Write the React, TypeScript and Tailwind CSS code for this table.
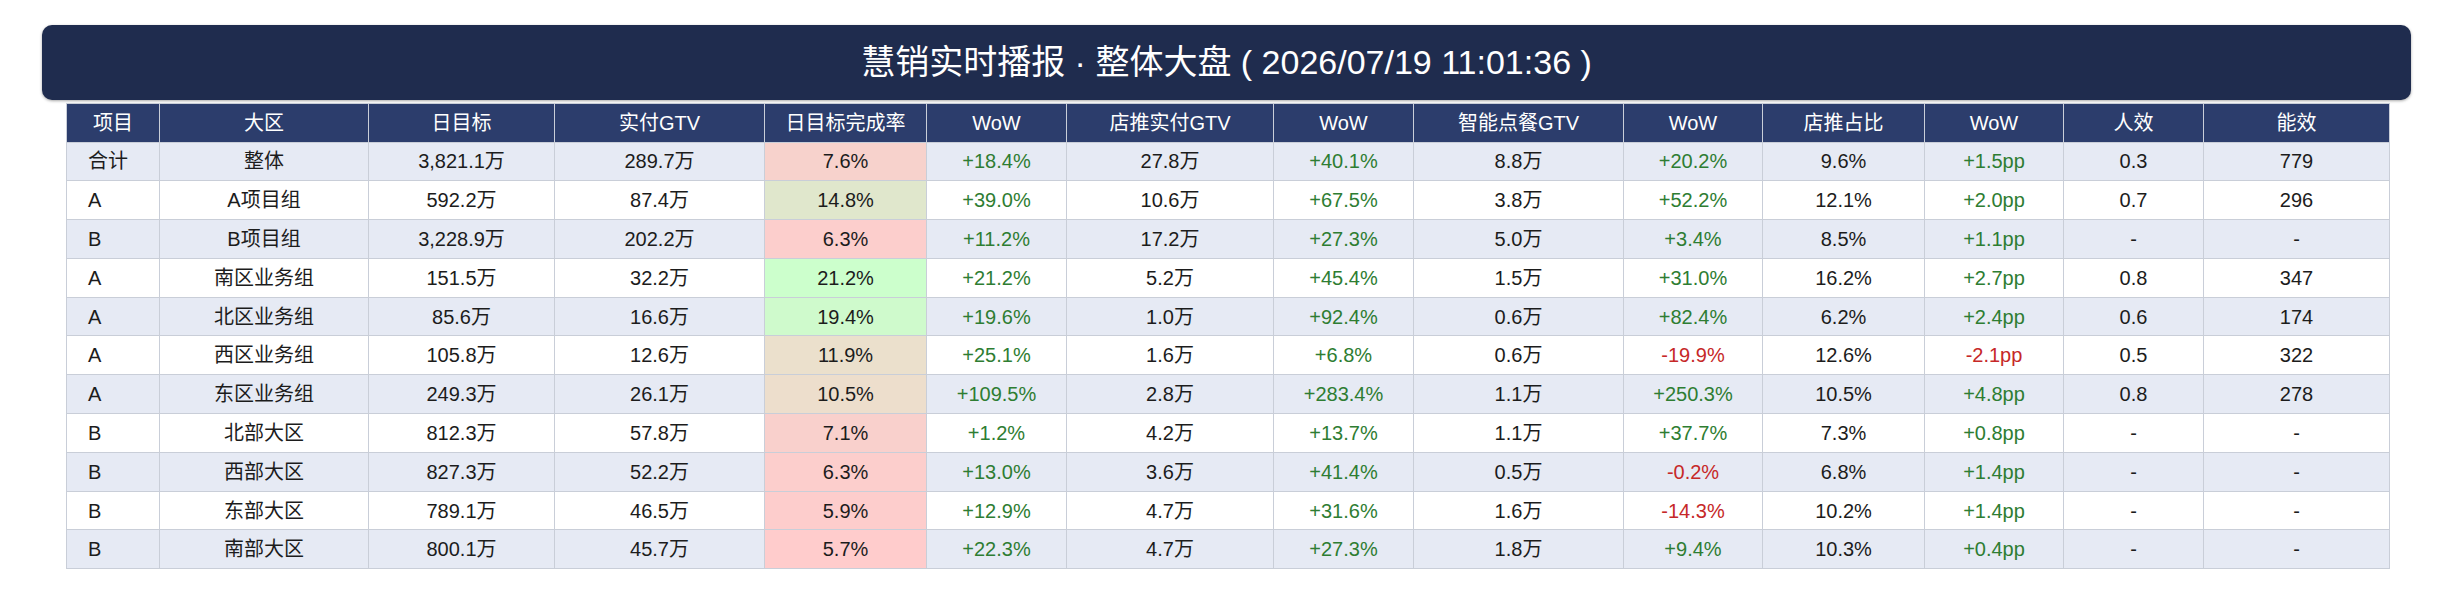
import React from 'react';

type Row = {
  item: string;
  region: string;
  target: string;
  gtv: string;
  rate: string;
  rateBg: string;
  wow1: string;
  storeGtv: string;
  wow2: string;
  smartGtv: string;
  wow3: string;
  share: string;
  wow4: string;
  perPerson: string;
  efficiency: string;
};

const rows: Row[] = [
  { item: '合计', region: '整体', target: '3,821.1万', gtv: '289.7万', rate: '7.6%', rateBg: 'bg-[#f7d2cc]', wow1: '+18.4%', storeGtv: '27.8万', wow2: '+40.1%', smartGtv: '8.8万', wow3: '+20.2%', share: '9.6%', wow4: '+1.5pp', perPerson: '0.3', efficiency: '779' },
  { item: 'A', region: 'A项目组', target: '592.2万', gtv: '87.4万', rate: '14.8%', rateBg: 'bg-[#e0e7cc]', wow1: '+39.0%', storeGtv: '10.6万', wow2: '+67.5%', smartGtv: '3.8万', wow3: '+52.2%', share: '12.1%', wow4: '+2.0pp', perPerson: '0.7', efficiency: '296' },
  { item: 'B', region: 'B项目组', target: '3,228.9万', gtv: '202.2万', rate: '6.3%', rateBg: 'bg-[#fccecc]', wow1: '+11.2%', storeGtv: '17.2万', wow2: '+27.3%', smartGtv: '5.0万', wow3: '+3.4%', share: '8.5%', wow4: '+1.1pp', perPerson: '-', efficiency: '-' },
  { item: 'A', region: '南区业务组', target: '151.5万', gtv: '32.2万', rate: '21.2%', rateBg: 'bg-[#ccffcc]', wow1: '+21.2%', storeGtv: '5.2万', wow2: '+45.4%', smartGtv: '1.5万', wow3: '+31.0%', share: '16.2%', wow4: '+2.7pp', perPerson: '0.8', efficiency: '347' },
  { item: 'A', region: '北区业务组', target: '85.6万', gtv: '16.6万', rate: '19.4%', rateBg: 'bg-[#cffacc]', wow1: '+19.6%', storeGtv: '1.0万', wow2: '+92.4%', smartGtv: '0.6万', wow3: '+82.4%', share: '6.2%', wow4: '+2.4pp', perPerson: '0.6', efficiency: '174' },
  { item: 'A', region: '西区业务组', target: '105.8万', gtv: '12.6万', rate: '11.9%', rateBg: 'bg-[#ebe0cc]', wow1: '+25.1%', storeGtv: '1.6万', wow2: '+6.8%', smartGtv: '0.6万', wow3: '-19.9%', share: '12.6%', wow4: '-2.1pp', perPerson: '0.5', efficiency: '322' },
  { item: 'A', region: '东区业务组', target: '249.3万', gtv: '26.1万', rate: '10.5%', rateBg: 'bg-[#eddecc]', wow1: '+109.5%', storeGtv: '2.8万', wow2: '+283.4%', smartGtv: '1.1万', wow3: '+250.3%', share: '10.5%', wow4: '+4.8pp', perPerson: '0.8', efficiency: '278' },
  { item: 'B', region: '北部大区', target: '812.3万', gtv: '57.8万', rate: '7.1%', rateBg: 'bg-[#f9d0cc]', wow1: '+1.2%', storeGtv: '4.2万', wow2: '+13.7%', smartGtv: '1.1万', wow3: '+37.7%', share: '7.3%', wow4: '+0.8pp', perPerson: '-', efficiency: '-' },
  { item: 'B', region: '西部大区', target: '827.3万', gtv: '52.2万', rate: '6.3%', rateBg: 'bg-[#fccecc]', wow1: '+13.0%', storeGtv: '3.6万', wow2: '+41.4%', smartGtv: '0.5万', wow3: '-0.2%', share: '6.8%', wow4: '+1.4pp', perPerson: '-', efficiency: '-' },
  { item: 'B', region: '东部大区', target: '789.1万', gtv: '46.5万', rate: '5.9%', rateBg: 'bg-[#fdcdcc]', wow1: '+12.9%', storeGtv: '4.7万', wow2: '+31.6%', smartGtv: '1.6万', wow3: '-14.3%', share: '10.2%', wow4: '+1.4pp', perPerson: '-', efficiency: '-' },
  { item: 'B', region: '南部大区', target: '800.1万', gtv: '45.7万', rate: '5.7%', rateBg: 'bg-[#ffcccc]', wow1: '+22.3%', storeGtv: '4.7万', wow2: '+27.3%', smartGtv: '1.8万', wow3: '+9.4%', share: '10.3%', wow4: '+0.4pp', perPerson: '-', efficiency: '-' },
];

const headers = ['项目', '大区', '日目标', '实付GTV', '日目标完成率', 'WoW', '店推实付GTV', 'WoW', '智能点餐GTV', 'WoW', '店推占比', 'WoW', '人效', '能效'];
const widths = ['w-[93px]', 'w-[209px]', 'w-[186px]', 'w-[210px]', 'w-[162px]', 'w-[140px]', 'w-[207px]', 'w-[140px]', 'w-[210px]', 'w-[139px]', 'w-[162px]', 'w-[139px]', 'w-[140px]', 'w-[186px]'];

// green for growth, red for decline, plain for "-"
const wowColor = (v: string) =>
  v.startsWith('+') ? 'text-[#2e7d32]' : v.startsWith('-') && v.length > 1 ? 'text-[#c62828]' : 'text-[#1c1c1c]';

const cell = 'border border-[#c9ced8] text-center align-middle p-0 whitespace-nowrap';

const App: React.FC = () => {
  return (
    <div className="min-h-[601px] bg-white px-[42px] pt-[25px] font-['Liberation_Sans','Noto_Sans_CJK_SC',sans-serif]">
      {/* Title */}
      <div className="flex h-[75px] items-center justify-center rounded-[10px] bg-[#1f2c4e] text-[34px] text-white shadow-[0_1px_3px_rgba(0,0,0,0.35)]">
        慧销实时播报 · 整体大盘 ( 2026/07/19 11:01:36 )
      </div>

      {/* Table */}
      <table className="ml-[24px] mt-[3px] w-[2323px] table-fixed border-collapse text-[20px] text-[#1c1c1c]">
        <colgroup>
          {widths.map((w, i) => (
            <col key={i} className={w} />
          ))}
        </colgroup>
        <thead>
          <tr className="h-[38.5px] bg-[#2c3d6c] text-white">
            {headers.map((h, i) => (
              <th key={i} className={`${cell} font-normal`}>{h}</th>
            ))}
          </tr>
        </thead>
        <tbody>
          {rows.map((r, i) => (
            <tr key={i} className={`h-[38.8px] ${i % 2 === 0 ? 'bg-[#e6eaf4]' : 'bg-white'}`}>
              <td className={`${cell} !text-left pl-[21px]`}>{r.item}</td>
              <td className={cell}>{r.region}</td>
              <td className={cell}>{r.target}</td>
              <td className={cell}>{r.gtv}</td>
              <td className={`${cell} ${r.rateBg}`}>{r.rate}</td>
              <td className={`${cell} ${wowColor(r.wow1)}`}>{r.wow1}</td>
              <td className={cell}>{r.storeGtv}</td>
              <td className={`${cell} ${wowColor(r.wow2)}`}>{r.wow2}</td>
              <td className={cell}>{r.smartGtv}</td>
              <td className={`${cell} ${wowColor(r.wow3)}`}>{r.wow3}</td>
              <td className={cell}>{r.share}</td>
              <td className={`${cell} ${wowColor(r.wow4)}`}>{r.wow4}</td>
              <td className={cell}>{r.perPerson}</td>
              <td className={cell}>{r.efficiency}</td>
            </tr>
          ))}
        </tbody>
      </table>
    </div>
  );
};

export default App;
